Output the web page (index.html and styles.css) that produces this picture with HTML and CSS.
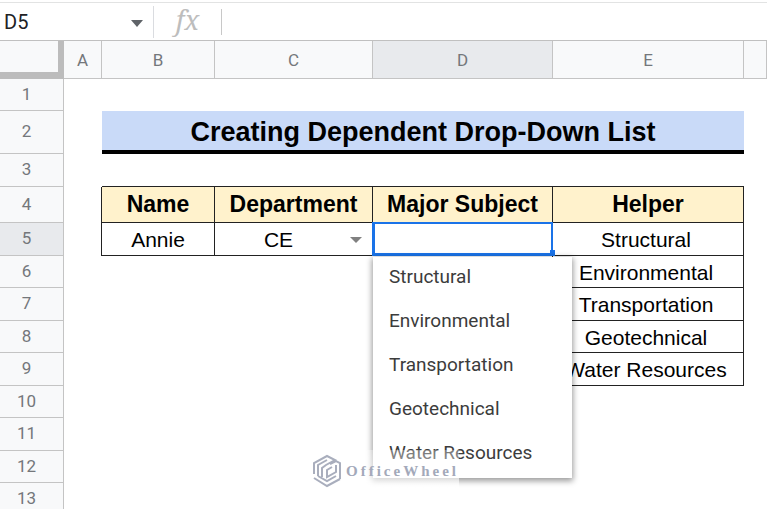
FILE: index.html
```html
<!DOCTYPE html>
<html lang="en">
<head>
    <meta charset="UTF-8">
    <meta name="viewport" content="width=device-width, initial-scale=1.0">
    <title>Creating Dependent Drop-Down List</title>
    <link rel="stylesheet" href="styles.css">
</head>
<body>
    <!-- Name box and formula bar -->
    <div class="formula-bar">
        <input class="name-box" type="text" value="D5" aria-label="Name box">
        <button class="name-arrow" type="button" aria-label="Named ranges">
            <svg width="12" height="7" viewBox="0 0 12 7"><path d="M0 0h12L6 7z" fill="#5f6368"/></svg>
        </button>
        <label class="fx" for="formula">fx</label>
        <input class="formula" id="formula" type="text">
    </div>

    <div class="sheet">
        <table class="grid">
            <colgroup>
                <col class="col-num">
                <col class="col-a">
                <col class="col-b">
                <col class="col-c">
                <col class="col-d">
                <col class="col-e">
                <col>
            </colgroup>
            <thead>
                <tr>
                    <th class="corner"></th>
                    <th>A</th>
                    <th>B</th>
                    <th>C</th>
                    <th class="active">D</th>
                    <th>E</th>
                    <th></th>
                </tr>
            </thead>
            <tbody>
                <tr class="short"><th>1</th><td colspan="6"></td></tr>
                <tr class="title-row"><th>2</th><td></td><td class="title" colspan="4">Creating Dependent Drop-Down List</td><td></td></tr>
                <tr><th>3</th><td></td><td class="line" colspan="4"></td><td></td></tr>
                <tr class="head-row">
                    <th>4</th>
                    <td class="edge"></td>
                    <td class="head">Name</td>
                    <td class="head">Department</td>
                    <td class="head">Major Subject</td>
                    <td class="head">Helper</td>
                    <td></td>
                </tr>
                <tr>
                    <th class="active">5</th>
                    <td class="edge"></td>
                    <td class="data">Annie</td>
                    <td class="data">
                        <div class="select-cell">
                            <select class="department" aria-label="Department">
                                <option>CE</option>
                            </select>
                            <svg width="12" height="6" viewBox="0 0 12 6"><path d="M0 0h12L6 6z" fill="#808080"/></svg>
                        </div>
                    </td>
                    <td class="data subject-data">
                        <div class="subject-cell">
                            <input class="subject" type="text" aria-label="Major Subject">
                            <span class="handle"></span>
                            <div class="menu">
                                <button type="button">Structural</button>
                                <button type="button">Environmental</button>
                                <button type="button">Transportation</button>
                                <button type="button">Geotechnical</button>
                                <button type="button">Water Resources</button>
                            </div>
                        </div>
                    </td>
                    <td class="data helper">Structural</td>
                    <td></td>
                </tr>
                <tr class="short"><th>6</th><td colspan="3"></td><td class="edge"></td><td class="data helper">Environmental</td><td></td></tr>
                <tr><th>7</th><td colspan="3"></td><td class="edge"></td><td class="data helper">Transportation</td><td></td></tr>
                <tr class="short"><th>8</th><td colspan="3"></td><td class="edge"></td><td class="data helper">Geotechnical</td><td></td></tr>
                <tr><th>9</th><td colspan="3"></td><td class="edge"></td><td class="data helper">Water Resources</td><td></td></tr>
                <tr class="short"><th>10</th><td colspan="6"></td></tr>
                <tr><th>11</th><td colspan="6"></td></tr>
                <tr class="short"><th>12</th><td colspan="6"></td></tr>
                <tr><th>13</th><td colspan="6"></td></tr>
            </tbody>
        </table>

        <!-- Watermark -->
        <div class="watermark">
            <svg width="30" height="34" viewBox="0 0 30 34" fill="none" stroke="#a9aebd" stroke-width="2">
                <path d="M2 20V9l13-7 8 4-9 5-4 3v9"/>
                <path d="M18 10l6-3 4 2v16"/>
                <path d="M6 22V11l9-5"/>
                <path d="M24 11v7l-9 5v-7l5-3"/>
                <path d="M2 24l13 8 13-7M6 22l9 5 9-5"/>
            </svg>
            <span>OfficeWheel</span>
        </div>
    </div>
</body>
</html>
```

FILE: styles.css
```css
* {
    box-sizing: border-box;
}
body {
    margin: 0;
    height: 100vh;
    overflow: hidden;
    display: flex;
    flex-direction: column;
    background-color: #fff;
    font-family: Roboto, Arial, sans-serif;
}
input, button, select {
    margin: 0;
    padding: 0;
    border: none;
    outline: none;
    border-radius: 0;
    background: none;
    font: inherit;
    color: inherit;
}

/* formula bar */
.formula-bar {
    display: flex;
    align-items: center;
    flex: none;
    height: 41px;
    padding-top: 3px;
    border-bottom: 1px solid #c0c0c0;
    box-shadow: inset 0 2px #fff, inset 0 3px #e2e3e3;
}
.name-box {
    width: 131px;
    padding-left: 4px;
    font-size: 20px;
    color: #202124;
}
.name-arrow {
    width: 23px;
    height: 32px;
    padding-top: 4px;
    border-right: 1px solid #dadce0;
    text-align: left;
    line-height: 0;
}
.fx {
    width: 68px;
    height: 26px;
    border-right: 1px solid #c8c8c8;
    font: italic 27px/22px "Noto Serif", "DejaVu Serif", serif;
    text-align: center;
    color: #bdbdbd;
}
.formula {
    flex: 1;
    min-width: 0;
    padding-left: 8px;
    font-size: 20px;
}

/* spreadsheet */
.sheet {
    position: relative;
    flex: 1;
    min-height: 0;
    overflow: hidden;
}
.grid {
    width: 100%;
    table-layout: fixed;
    border-collapse: separate;
    border-spacing: 0;
}
.col-num { width: 64px; }
.col-a { width: 38px; }
.col-b { width: 113px; }
.col-c { width: 158px; }
.col-d { width: 180px; }
.col-e { width: 191px; }

.grid tr { height: 33px; }
.grid .short { height: 32px; }
.grid .title-row { height: 43px; }
.grid .head-row { height: 36px; }
.grid thead tr { height: 38px; }

.grid th, .grid td {
    padding: 0;
    text-align: center;
    white-space: nowrap;
}
.grid th {
    background-color: #f8f9fa;
    border-right: 1px solid #c4c4c4;
    border-bottom: 1px solid #c4c4c4;
    font-size: 17px;
    line-height: 20px;
    font-weight: normal;
    color: #74777b;
}
.grid tbody th {
    padding: 0 10px 2px 0;
}
.grid th.active {
    background-color: #e8eaed;
}
.grid .corner {
    border-right: 6px solid #bcbcbc;
    border-bottom: 7px solid #bcbcbc;
}
.grid .title {
    padding-top: 2px;
    background-color: #c9daf8;
    border-bottom: 4px solid #000;
    font: bold 27px/30px "Liberation Sans", Arial, sans-serif;
}
.grid .line {
    border-bottom: 1px solid #222;
}
.grid .edge {
    border-right: 1px solid #222;
}
.grid .head, .grid .data {
    border-right: 1px solid #222;
    border-bottom: 1px solid #222;
    font: 21px/24px "Liberation Sans", Arial, sans-serif;
    color: #000;
}
.grid .data {
    padding-top: 2px;
}
.grid .helper {
    padding-right: 4px;
}
.grid .subject-data {
    padding: 0;
}
.grid .head {
    padding-bottom: 2px;
    background-color: #fff2cc;
    font-weight: bold;
    font-size: 23px;
}

.select-cell {
    display: flex;
    align-items: center;
    padding-right: 10px;
}
.department {
    flex: 1;
    appearance: none;
    padding-right: 8px;
    text-align: center;
    text-align-last: center;
}

/* selected cell with its open list */
.subject-cell {
    position: relative;
    height: 32px;
}
.subject {
    position: absolute;
    inset: -1px;
    width: calc(100% + 2px);
    height: 34px;
    padding: 0 4px;
    border: 3px solid #1a73e8;
    border-width: 2px 2px 3px 3px;
    background-color: #fff;
}
.handle {
    position: absolute;
    right: -3px;
    bottom: -1px;
    width: 5px;
    height: 6px;
    background-color: #1a73e8;
}
.menu {
    position: absolute;
    top: 34px;
    left: 0;
    z-index: 1;
    width: 199px;
    padding-bottom: 1px;
    background-color: #fff;
    box-shadow: 0 2px 6px 1px rgba(0, 0, 0, 0.4);
}
.menu button {
    display: block;
    width: 100%;
    height: 44px;
    padding: 0 16px 4px;
    font: 19px/24px Roboto, Arial, sans-serif;
    text-align: left;
    color: #3c3c3c;
}

.watermark {
    position: absolute;
    left: 308px;
    top: 409px;
    z-index: 2;
    display: flex;
    align-items: center;
    gap: 4px;
    height: 38px;
    padding: 4px 0 0 4px;
    background-image: linear-gradient(rgba(255, 255, 255, 0.3), rgba(255, 255, 255, 0.7));
    font: bold 15px/16px "Liberation Serif", serif;
    letter-spacing: 3px;
    color: #a3a9ba;
}
```
